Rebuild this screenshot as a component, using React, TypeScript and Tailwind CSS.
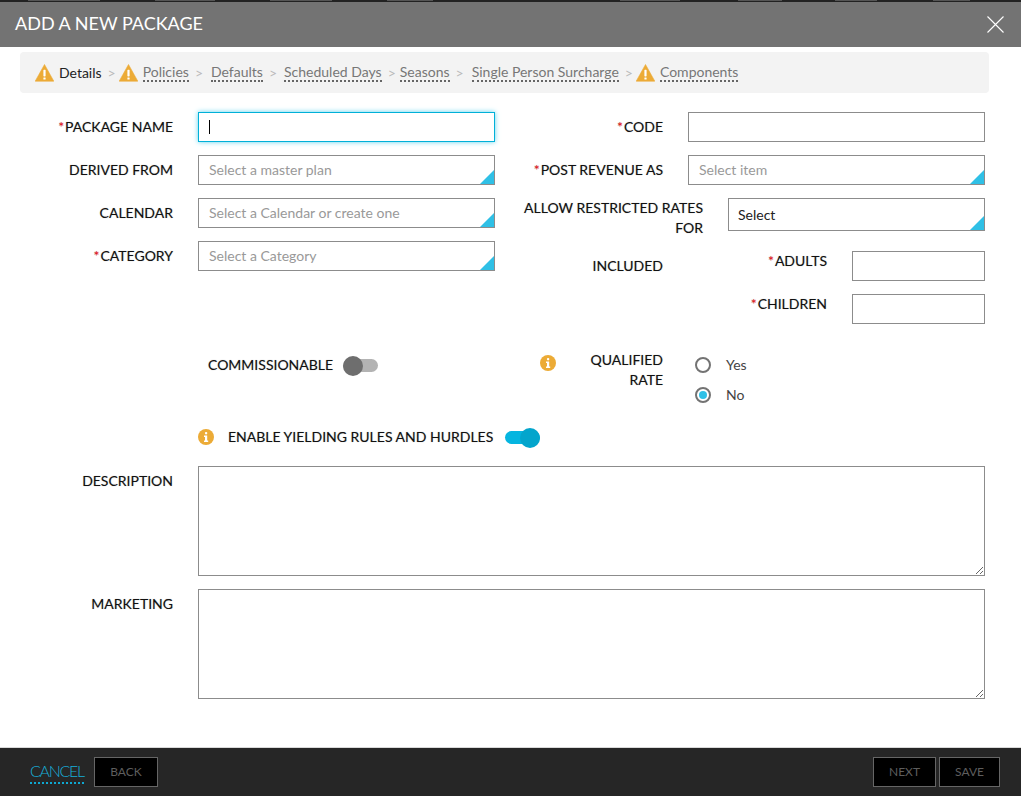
import React from 'react';

const labelCls = 'text-right text-[14px] leading-[20px] text-[#111] [text-shadow:0_0_1px_rgba(0,0,0,0.35)]';
const inputCls = 'block h-[30px] border border-[#8c8c8c] bg-white outline-none';

const WarnIcon = () => (
  <svg width="19" height="18" viewBox="0 0 19 18" className="shrink-0">
    <path d="M9.5 0.5 L18.8 17.2 L0.2 17.2 Z" fill="#ecab36" stroke="#ecab36" strokeLinejoin="round" strokeWidth="0.6" />
    <rect x="8.4" y="5.8" width="2.2" height="6.6" rx="0.6" fill="#fff" />
    <rect x="8.4" y="13.4" width="2.2" height="2.2" rx="0.4" fill="#fff" />
  </svg>
);

const InfoIcon = () => (
  <svg width="16" height="16" viewBox="0 0 16 16" className="shrink-0">
    <circle cx="8" cy="8" r="8" fill="#ecab36" />
    <rect x="6.9" y="3" width="2.4" height="2.4" rx="1.1" fill="#fff" />
    <path d="M6 6.6 H9.2 V11.6 H10.2 V13 H6 V11.6 H7 V8 H6 Z" fill="#fff" />
  </svg>
);

const Req = () => <span className="pr-px text-[#e8141c]">*</span>;

const Corner = () => (
  <svg width="14" height="14" viewBox="0 0 14 14" className="absolute bottom-px right-px">
    <path d="M14 0 V14 H0 Z" fill="#2fc0e6" />
  </svg>
);

const Sep = ({ after }: { after: string }) => <span className={`ml-[6px] ${after} text-[#bbb]`}>&gt;</span>;

const Crumb = ({ text, warn }: { text: string; warn?: boolean }) => (
  <>
    {warn && <WarnIcon />}
    <span className={`${warn ? 'ml-[5px]' : ''} border-b-2 border-dotted border-[#666] leading-[17px] text-[#777]`}>{text}</span>
  </>
);

const SelectBox = ({ placeholder }: { placeholder: string }) => (
  <div className="relative">
    <input className={`${inputCls} w-[297px] px-[10px] pb-[2px] text-[14px] placeholder:text-[#999]`} placeholder={placeholder} readOnly />
    <Corner />
  </div>
);

const Toggle = ({ on }: { on?: boolean }) => (
  <div className={`relative h-[13px] w-[35px] rounded-full ${on ? 'bg-[#05b5e0]' : 'bg-[#b3b3b3]'}`}>
    <div className={`absolute top-[-3px] h-[20px] w-[20px] rounded-full ${on ? 'right-0 bg-[#03a5cc]' : 'left-0 bg-[#6e6e6e]'}`} />
  </div>
);

const Radio = ({ checked, label }: { checked?: boolean; label: string }) => (
  <div className="flex h-[30px] items-center">
    <span className="flex h-[16px] w-[16px] items-center justify-center rounded-full border-2 border-[#737373] bg-white">
      {checked && <span className="h-[8px] w-[8px] rounded-full bg-[#2fc0e6]" />}
    </span>
    <span className="ml-[15px] pb-[2px] text-[14px] text-[#444]">{label}</span>
  </div>
);

const FootBtn = ({ text, width }: { text: string; width: string }) => (
  <button className={`h-[30px] ${width} border border-[#666] bg-black text-[12px] text-[#5e5e5e]`}>{text}</button>
);

export default function App() {
  return (
    <div className="flex h-[796px] w-[1021px] flex-col overflow-hidden bg-white font-['Lato','Open_Sans',sans-serif]">
      {/* page behind the dialog, only its last pixels show */}
      <div className="h-[2px] bg-[#222]">
        <div className="flex h-px">
          <span className="ml-[28px] w-[72px] bg-[#555]" />
          <span className="ml-[55px] w-[60px] bg-[#555]" />
          <span className="ml-[55px] w-[62px] bg-[#555]" />
          <span className="ml-[55px] w-[46px] bg-[#555]" />
          <span className="ml-[187px] w-[60px] bg-[#555]" />
          <span className="ml-[58px] w-[44px] bg-[#555]" />
          <span className="ml-[53px] w-[42px] bg-[#555]" />
          <span className="ml-[56px] w-[37px] bg-[#555]" />
        </div>
      </div>
      <header className="flex h-[45px] items-center justify-between bg-[#737373] pl-[15px] pr-[17px] text-white">
        <h1 className="pb-[3px] text-[18px]">ADD A NEW PACKAGE</h1>
        <svg width="17" height="17" viewBox="0 0 17 17" stroke="#fff" strokeWidth="1.1">
          <path d="M0.5 0.5 L16.5 16.5 M16.5 0.5 L0.5 16.5" />
        </svg>
      </header>

      {/* steps */}
      <nav className="ml-[20px] mt-[5px] flex h-[41px] w-[969px] items-center rounded-[4px] bg-[#f3f3f3] pl-[15px] text-[14px]">
        <WarnIcon />
        <span className="ml-[5px] text-[#222]">Details</span>
        <Sep after="mr-[3px]" />
        <Crumb text="Policies" warn />
        <Sep after="mr-[8px]" />
        <Crumb text="Defaults" />
        <Sep after="mr-[7px]" />
        <Crumb text="Scheduled Days" />
        <Sep after="mr-[4px]" />
        <Crumb text="Seasons" />
        <Sep after="mr-[8px]" />
        <Crumb text="Single Person Surcharge" />
        <Sep after="mr-[3px]" />
        <Crumb text="Components" warn />
      </nav>

      {/* form */}
      <main className="flex-1">
        <div className="mt-[19px] grid grid-cols-[495px_1fr]">
          <div className="flex flex-col gap-[13px]">
            <div className="flex items-center gap-[25px]">
              <label className={`${labelCls} w-[173px]`}><Req />PACKAGE NAME</label>
              <div className="relative">
                <input className="block h-[30px] w-[297px] border border-[#00b0d8] bg-white shadow-[0_0_5px_#5fd3ee] outline-none" readOnly />
                <span className="absolute left-[11px] top-[8px] h-[14px] w-px bg-black" />
              </div>
            </div>
            <div className="flex items-center gap-[25px]">
              <label className={`${labelCls} w-[173px]`}>DERIVED FROM</label>
              <SelectBox placeholder="Select a master plan" />
            </div>
            <div className="flex items-center gap-[25px]">
              <label className={`${labelCls} w-[173px]`}>CALENDAR</label>
              <SelectBox placeholder="Select a Calendar or create one" />
            </div>
            <div className="flex items-center gap-[25px]">
              <label className={`${labelCls} w-[173px]`}><Req />CATEGORY</label>
              <SelectBox placeholder="Select a Category" />
            </div>
          </div>

          <div className="flex flex-col">
            <div className="flex items-center gap-[25px]">
              <label className={`${labelCls} w-[168px]`}><Req />CODE</label>
              <input className={`${inputCls} w-[297px]`} readOnly />
            </div>
            <div className="mt-[13px] flex items-center gap-[25px]">
              <label className={`${labelCls} w-[168px]`}><Req />POST REVENUE AS</label>
              <SelectBox placeholder="Select item" />
            </div>
            <div className="mt-[13px] flex h-[33px] items-start gap-[25px] pl-[28px]">
              <label className={`${labelCls} w-[180px]`}>ALLOW RESTRICTED RATES FOR</label>
              <div className="relative">
                <div className="flex h-[33px] w-[257px] items-center border border-[#8c8c8c] pl-[9px] text-[14px] text-[#222]">Select</div>
                <Corner />
              </div>
            </div>
            <div className="mt-[20px] flex">
              <label className={`${labelCls} mt-[5px] w-[168px]`}>INCLUDED</label>
              <div className="flex flex-col gap-[13px]">
                <div className="flex gap-[25px]">
                  <label className={`${labelCls} w-[164px]`}><Req />ADULTS</label>
                  <input className={`${inputCls} w-[133px]`} readOnly />
                </div>
                <div className="flex gap-[25px]">
                  <label className={`${labelCls} w-[164px]`}><Req />CHILDREN</label>
                  <input className={`${inputCls} w-[133px]`} readOnly />
                </div>
              </div>
            </div>
          </div>
        </div>

        <div className="mt-[26px] grid grid-cols-[495px_1fr]">
          <div className="flex h-[30px] items-center pl-[208px]">
            <span className={labelCls}>COMMISSIONABLE</span>
            <span className="ml-[10px]"><Toggle /></span>
          </div>
          <div className="flex pl-[45px]">
            <span className="mt-[5px]"><InfoIcon /></span>
            <label className={`${labelCls} w-[107px]`}>QUALIFIED RATE</label>
            <div className="ml-[32px] flex flex-col">
              <Radio label="Yes" />
              <Radio checked label="No" />
            </div>
          </div>
        </div>

        <div className="mt-[12px] flex h-[30px] items-center pl-[198px]">
          <InfoIcon />
          <span className={`${labelCls} ml-[14px]`}>ENABLE YIELDING RULES AND HURDLES</span>
          <span className="ml-[12px]"><Toggle on /></span>
        </div>

        <div className="mt-[14px] flex gap-[25px]">
          <label className={`${labelCls} w-[173px] pt-[5px]`}>DESCRIPTION</label>
          <textarea className="block h-[110px] w-[787px] border border-[#8c8c8c] outline-none" readOnly />
        </div>
        <div className="mt-[13px] flex gap-[25px]">
          <label className={`${labelCls} w-[173px] pt-[5px]`}>MARKETING</label>
          <textarea className="block h-[110px] w-[787px] border border-[#8c8c8c] outline-none" readOnly />
        </div>
      </main>

      {/* footer */}
      <footer className="flex h-[49px] items-center border-t border-[#d9d9d9] bg-[#262626] pl-[30px] pr-[21px]">
        <a className="w-[54px] whitespace-nowrap border-b-2 border-dotted border-[#0ea8d2] text-[16px] font-light leading-[22px] tracking-[-1.3px] text-[#17aed8]">CANCEL</a>
        <span className="ml-[10px]"><FootBtn text="BACK" width="w-[64px]" /></span>
        <div className="ml-auto flex gap-[3px]">
          <FootBtn text="NEXT" width="w-[63px]" />
          <FootBtn text="SAVE" width="w-[61px]" />
        </div>
      </footer>
    </div>
  );
}
